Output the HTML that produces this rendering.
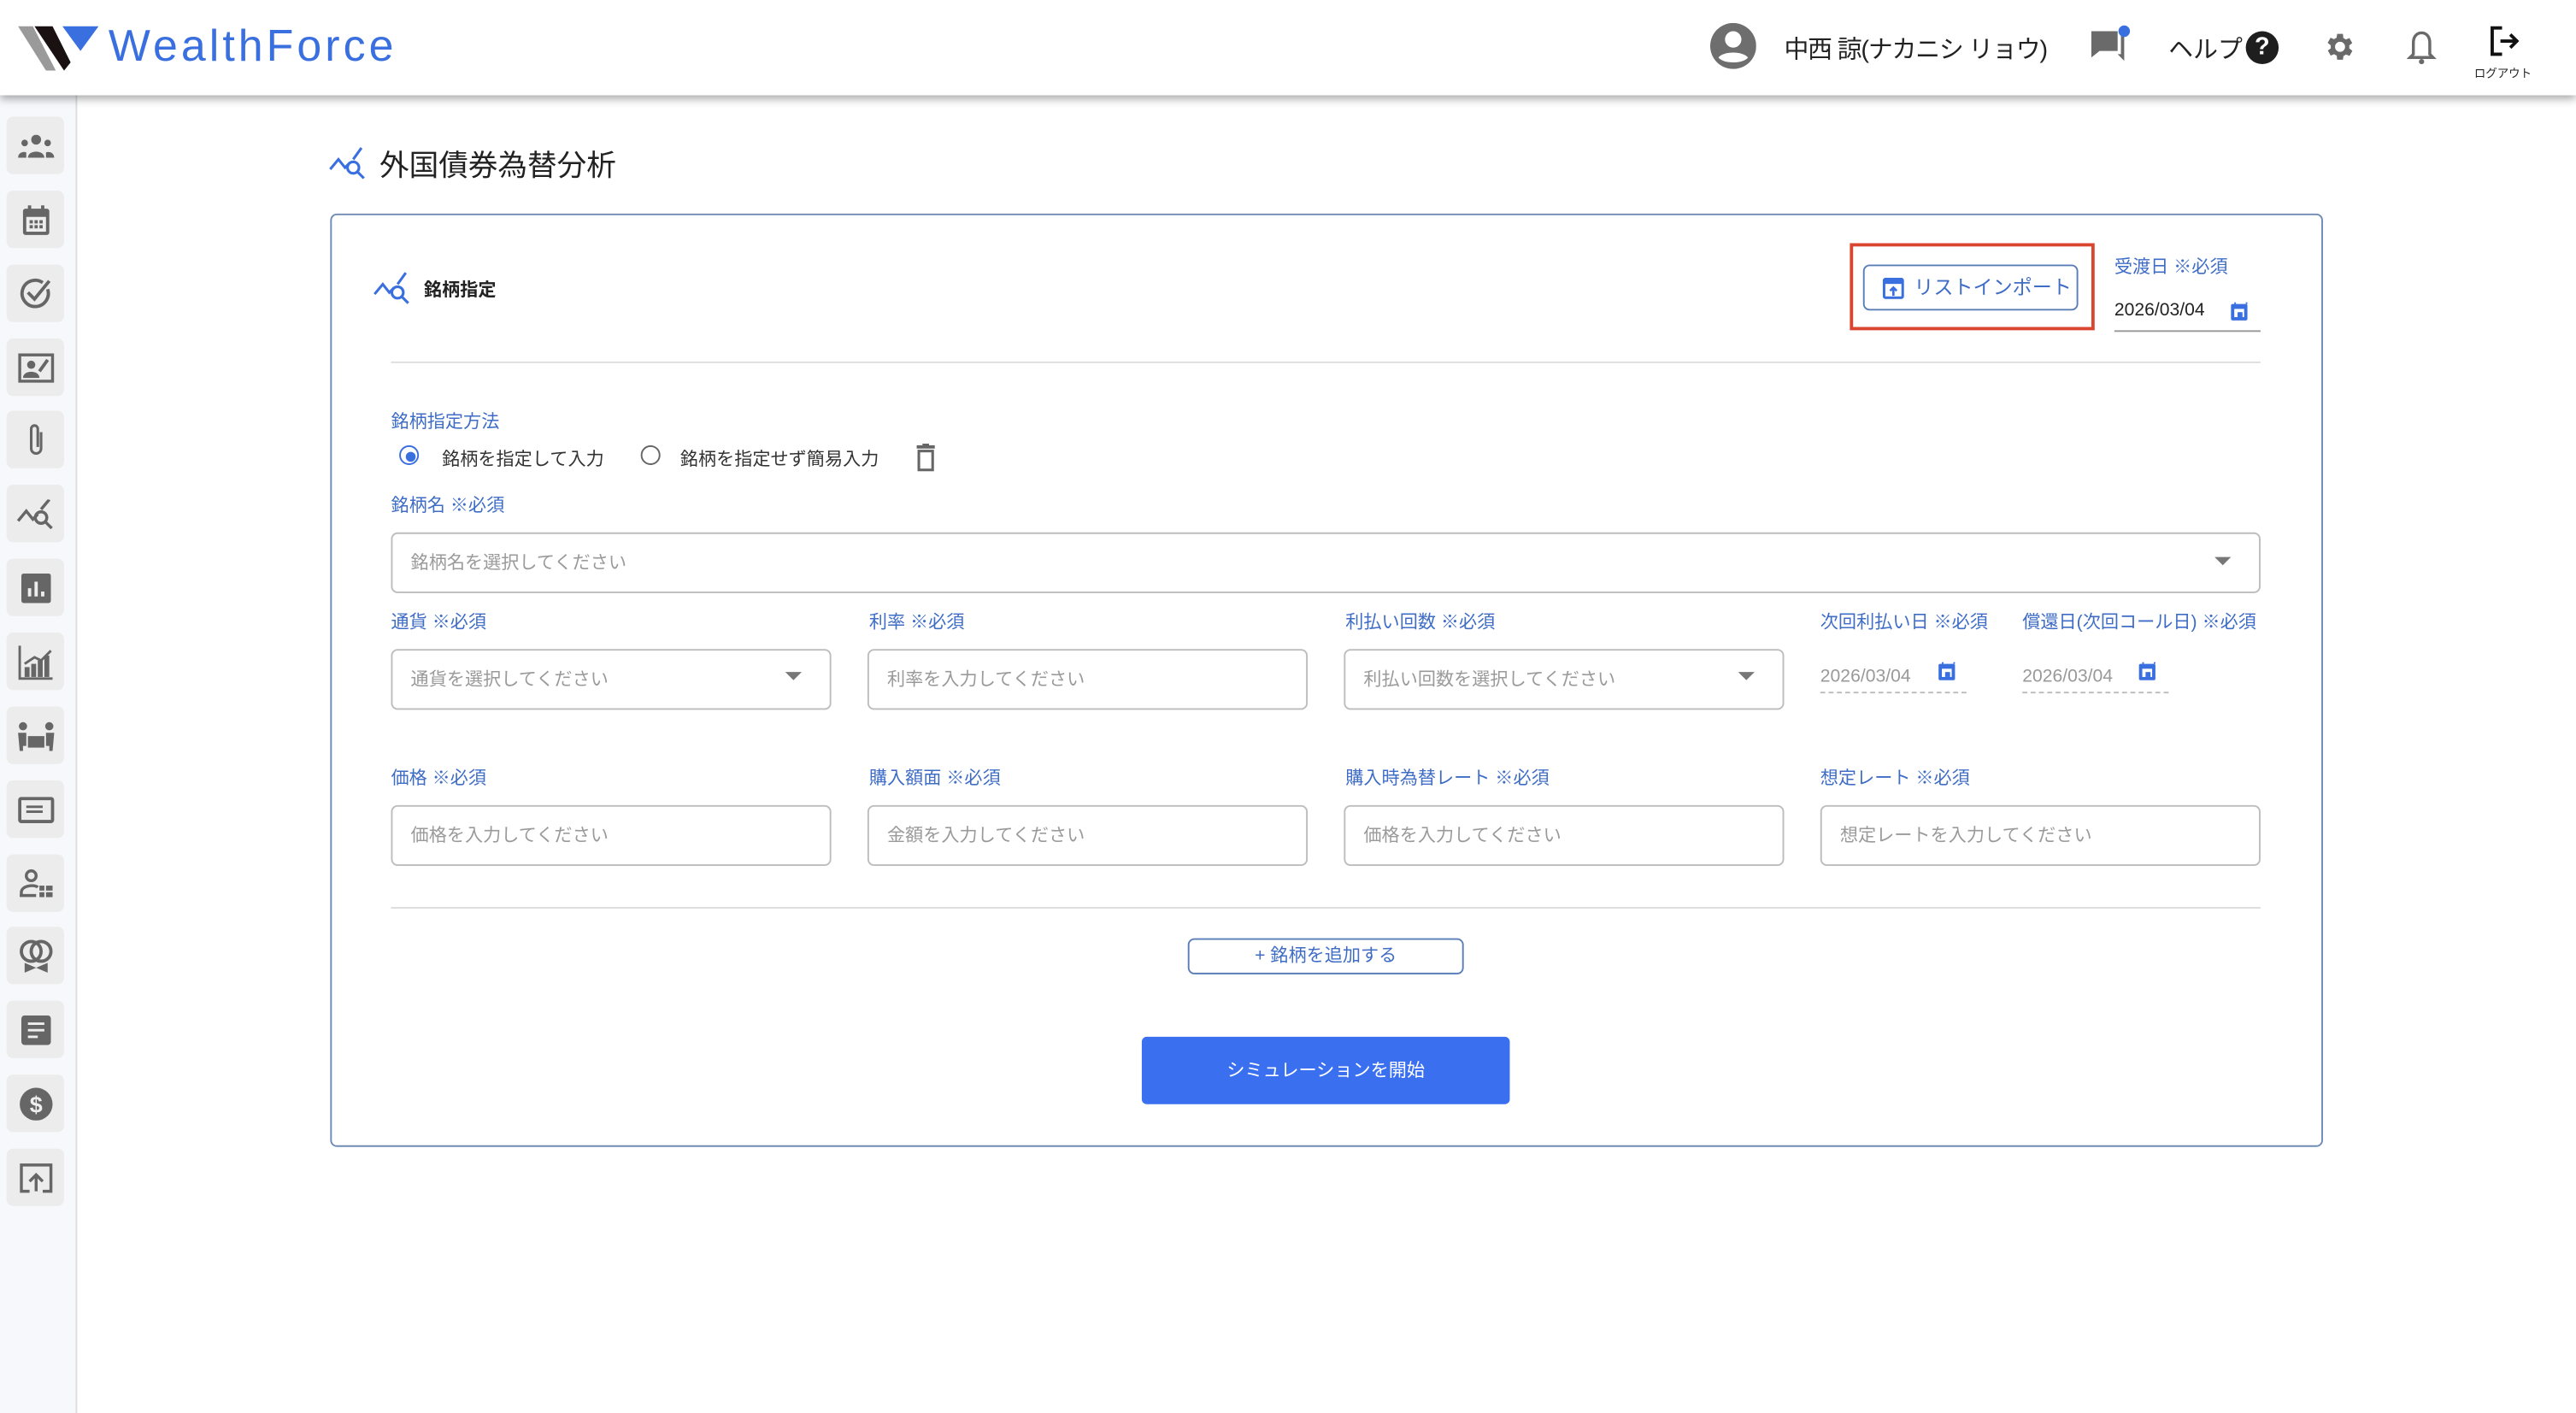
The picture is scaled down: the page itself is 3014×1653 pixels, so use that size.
<!DOCTYPE html>
<html><head><meta charset="utf-8"><style>
html,body{margin:0;padding:0;width:3014px;height:1652px;overflow:hidden;background:#fff}
#s{position:absolute;left:0;top:0;width:1568px;height:860px;transform:scale(1.92219);transform-origin:0 0;font-family:"Liberation Sans","Noto Sans CJK JP",sans-serif;color:#222}
.a{position:absolute}
.hdr{left:0;top:0;width:1568px;height:58px;background:#fff;box-shadow:0 2px 5px rgba(0,0,0,.35);z-index:2}
.side{left:0;top:58px;width:46px;height:802px;background:#f7f8fc;border-right:1px solid #dcdde2}
.sb{left:4px;width:35px;height:35px;background:#ececec;border-radius:4px;display:flex;align-items:center;justify-content:center}
.lbl{font-size:11px;color:#3f6dc6;white-space:nowrap;line-height:14px;margin-top:1px}
.inp{border:1px solid #bdbdbd;border-radius:4px;background:#fff;height:36px;box-sizing:border-box;font-size:11px;color:#9a9a9a;padding-left:11px;line-height:37px;white-space:nowrap}
.arr{position:absolute;right:17px;top:13px;width:0;height:0;border-left:5px solid transparent;border-right:5px solid transparent;border-top:5px solid #777}
.dt{font-size:11px;color:#999;white-space:nowrap;border-bottom:1px dashed #bbb;height:19px;width:89px;line-height:16px}
.cal{position:absolute;width:10px;height:10px;background:#3a6fe0;border-radius:1px}
.cal:after{content:"";position:absolute;left:2px;top:3px;width:6px;height:5px;background:#fff}
.cal:before{content:"";position:absolute;left:4px;top:5px;width:3px;height:3px;background:#3a6fe0;z-index:1;box-shadow:-3px -7px 0 -1px #3a6fe0,4px -7px 0 -1px #3a6fe0}
</style></head><body><div id="s">
<div class="a hdr">
 <svg class="a" style="left:10px;top:13px" width="52" height="30" viewBox="0 0 52 30"><polygon points="1,3 10,3 24,30 18,30" fill="#9a9a9a"/><polygon points="11,3 22,3 33,25 29,30" fill="#1a1212"/><polygon points="28,3 50,3 39,18" fill="#3a6fe0"/></svg>
 <div class="a" style="left:66px;top:12px;font-size:27px;color:#3a6fe0;letter-spacing:2.1px;line-height:32px">WealthForce</div>
 <svg class="a" style="left:1041px;top:14px" width="28" height="28" viewBox="0 0 28 28"><circle cx="14" cy="14" r="14" fill="#6e6e6e"/><circle cx="14" cy="10" r="5" fill="#fff"/><path d="M5 21c3-4 15-4 18 0c-3 4-15 4-18 0z" fill="#fff"/></svg>
 <div class="a" style="left:1086px;top:19px;font-size:15px;color:#222;white-space:nowrap;letter-spacing:-0.6px">中西 諒(ナカニシ リョウ)</div>
 <svg class="a" style="left:1272px;top:15px" width="26" height="24" viewBox="0 0 26 24"><path d="M1 4h16v12H6l-5 4z" fill="#6a6a6a"/><path d="M5 18h14V7h2v15l-4-4z" fill="#6a6a6a"/><circle cx="21" cy="4" r="3.5" fill="#3a6fe0"/></svg>
 <div class="a" style="left:1320px;top:19px;font-size:15px;color:#222">ヘルプ</div>
 <div class="a" style="left:1367px;top:19px;width:20px;height:20px;border-radius:50%;background:#1e1e1e;color:#fff;font-size:15px;font-weight:bold;text-align:center;line-height:20px">?</div>
 <svg class="a" style="left:1413px;top:18px" width="21" height="21" viewBox="0 0 24 24"><path fill="#6a6a6a" d="M19.4 13a7.5 7.5 0 000-2l2.1-1.6-2-3.5-2.5 1a7 7 0 00-1.7-1L15 3h-4l-.4 2.7a7 7 0 00-1.7 1l-2.5-1-2 3.5L6.6 11a7.5 7.5 0 000 2l-2.1 1.6 2 3.5 2.5-1a7 7 0 001.7 1L11 21h4l.4-2.7a7 7 0 001.7-1l2.5 1 2-3.5zM13 15.5a3.5 3.5 0 110-7 3.5 3.5 0 010 7z"/></svg>
 <svg class="a" style="left:1465px;top:18px" width="18" height="22" viewBox="0 0 18 22"><path d="M9 2c3.5 0 5 3 5 6v7l2 2H2l2-2V8c0-3 1.5-6 5-6z" fill="none" stroke="#6a6a6a" stroke-width="1.8"/><circle cx="9" cy="19.5" r="1.6" fill="#6a6a6a"/></svg>
 <svg class="a" style="left:1515px;top:15px" width="20" height="20" viewBox="0 0 20 20"><path d="M8 2H2v16h6" fill="none" stroke="#111" stroke-width="2"/><path d="M7 10h10M13 6l4 4-4 4" fill="none" stroke="#111" stroke-width="2"/></svg>
 <div class="a" style="left:1506px;top:40px;font-size:7px;color:#222">ログアウト</div>
</div>
<div class="a side"></div>
<div class="a sb" style="top:71px"><svg width="22" height="14" viewBox="0 0 22 14"><circle cx="11" cy="3" r="3" fill="#666"/><circle cx="4" cy="5" r="2" fill="#666"/><circle cx="18" cy="5" r="2" fill="#666"/><path d="M6 14c0-5 10-5 10 0zM0 14c0-4 5-4 5-3v3zM22 14c0-4-5-4-5-3v3z" fill="#666"/></svg></div>
<div class="a sb" style="top:116px"><svg width="18" height="20" viewBox="0 0 18 20"><rect x="1" y="3" width="16" height="16" rx="1.5" fill="#666"/><rect x="3" y="8" width="12" height="9" fill="#eee"/><rect x="4" y="1" width="2" height="4" fill="#666"/><rect x="12" y="1" width="2" height="4" fill="#666"/><g fill="#666"><rect x="5" y="10" width="2" height="2"/><rect x="8" y="10" width="2" height="2"/><rect x="11" y="10" width="2" height="2"/><rect x="5" y="13" width="2" height="2"/><rect x="8" y="13" width="2" height="2"/><rect x="11" y="13" width="2" height="2"/></g></svg></div>
<div class="a sb" style="top:161px"><svg width="22" height="22" viewBox="0 0 22 22"><path d="M18 8a8 8 0 11-3-4" fill="none" stroke="#666" stroke-width="2"/><path d="M6 10l4 4 9-11" fill="none" stroke="#666" stroke-width="2"/></svg></div>
<div class="a sb" style="top:206px"><svg width="22" height="18" viewBox="0 0 22 18"><rect x="1" y="1" width="20" height="16" fill="none" stroke="#666" stroke-width="1.8"/><circle cx="8" cy="7" r="2.5" fill="#666"/><path d="M3 15c0-5 10-5 10 0z" fill="#666"/><path d="M13 11l5-7" stroke="#666" stroke-width="2"/></svg></div>
<div class="a sb" style="top:250px"><svg width="12" height="22" viewBox="0 0 12 22"><path d="M9 6v10a3 3 0 01-6 0V4a2 2 0 014 0v11" fill="none" stroke="#666" stroke-width="1.6"/></svg></div>
<div class="a sb" style="top:295px"><svg width="24" height="18" viewBox="0 0 24 18"><path d="M1 13l5-6 4 5 3-3" fill="none" stroke="#666" stroke-width="1.8"/><circle cx="15" cy="11" r="3.5" fill="none" stroke="#666" stroke-width="1.8"/><path d="M17.5 13.5l4 4M15 6l5-6" stroke="#666" stroke-width="1.8"/></svg></div>
<div class="a sb" style="top:340px"><svg width="18" height="18" viewBox="0 0 18 18"><rect width="18" height="18" rx="1.5" fill="#666"/><rect x="4" y="9" width="2" height="5" fill="#eee"/><rect x="8" y="5" width="2" height="9" fill="#eee"/><rect x="12" y="11" width="2" height="3" fill="#eee"/></svg></div>
<div class="a sb" style="top:385px"><svg width="22" height="22" viewBox="0 0 22 22"><path d="M1 1v20h20" fill="none" stroke="#666" stroke-width="1.5"/><g fill="#666"><rect x="4" y="14" width="3" height="6"/><rect x="8" y="12" width="3" height="8"/><rect x="12" y="10" width="3" height="10"/><rect x="16" y="7" width="3" height="13"/></g><path d="M4 12l6-4 4 2 6-6" fill="none" stroke="#666" stroke-width="1.5"/></svg></div>
<div class="a sb" style="top:430px"><svg width="24" height="18" viewBox="0 0 24 18"><circle cx="4" cy="3" r="2.5" fill="#666"/><circle cx="20" cy="3" r="2.5" fill="#666"/><path d="M1 7h5v8H4v3H2zM23 7h-5v8h2v3h2z" fill="#666"/><rect x="7" y="9" width="10" height="7" fill="#666"/></svg></div>
<div class="a sb" style="top:475px"><svg width="22" height="16" viewBox="0 0 22 16"><rect x="1" y="1" width="20" height="14" rx="1" fill="none" stroke="#666" stroke-width="2"/><path d="M5 6h10M5 9h10" stroke="#666" stroke-width="1.5"/></svg></div>
<div class="a sb" style="top:520px"><svg width="22" height="18" viewBox="0 0 22 18"><circle cx="8" cy="4" r="3" fill="none" stroke="#666" stroke-width="1.8"/><path d="M2 16v-2c0-4 8-5 10-3" fill="none" stroke="#666" stroke-width="1.8"/><path d="M1 16h10" stroke="#666" stroke-width="1.8"/><g fill="#666"><rect x="13" y="10" width="3" height="3"/><rect x="17" y="10" width="4" height="3"/><rect x="13" y="14" width="3" height="3"/><rect x="17" y="14" width="4" height="3"/></g></svg></div>
<div class="a sb" style="top:564px"><svg width="22" height="22" viewBox="0 0 22 22"><circle cx="8" cy="8" r="6" fill="none" stroke="#666" stroke-width="2"/><circle cx="14" cy="8" r="6" fill="none" stroke="#666" stroke-width="2"/><path d="M4 15l7 3-7 3zM18 15l-7 3 7 3z" fill="#666"/></svg></div>
<div class="a sb" style="top:609px"><svg width="18" height="18" viewBox="0 0 18 18"><rect width="18" height="18" rx="2" fill="#666"/><path d="M4 5h10M4 9h10M4 13h6" stroke="#eee" stroke-width="1.5"/></svg></div>
<div class="a sb" style="top:654px"><svg width="20" height="20" viewBox="0 0 20 20"><circle cx="10" cy="10" r="10" fill="#666"/><text x="10" y="15" font-size="14" text-anchor="middle" fill="#eee" font-family="Liberation Sans" font-weight="bold">$</text></svg></div>
<div class="a sb" style="top:699px"><svg width="20" height="18" viewBox="0 0 20 18"><path d="M6 17H1V1h18v16h-5" fill="none" stroke="#666" stroke-width="1.8"/><path d="M10 17V7M6 11l4-4 4 4" fill="none" stroke="#666" stroke-width="1.8"/></svg></div>

<svg class="a" style="left:200px;top:89px" width="24" height="22" viewBox="0 0 24 22"><path d="M1 14l5-6 4 5 3-3" fill="none" stroke="#3a6fe0" stroke-width="1.6"/><circle cx="15" cy="13" r="3.5" fill="none" stroke="#3a6fe0" stroke-width="1.6"/><path d="M17.5 15.5l4 4M15 8l5-7" stroke="#3a6fe0" stroke-width="1.6"/></svg>
<div class="a" style="left:231px;top:89px;font-size:18px;color:#222;white-space:nowrap;line-height:24px">外国債券為替分析</div>

<div class="a" style="left:201px;top:130px;width:1213px;height:568px;border:1px solid #6f8bb3;border-radius:4px;box-sizing:border-box"></div>
<svg class="a" style="left:227px;top:165px" width="24" height="22" viewBox="0 0 24 22"><path d="M1 14l5-6 4 5 3-3" fill="none" stroke="#3a6fe0" stroke-width="1.6"/><circle cx="15" cy="13" r="3.5" fill="none" stroke="#3a6fe0" stroke-width="1.6"/><path d="M17.5 15.5l4 4M15 8l5-7" stroke="#3a6fe0" stroke-width="1.6"/></svg>
<div class="a" style="left:258px;top:168px;font-size:11px;font-weight:bold;color:#222">銘柄指定</div>

<div class="a" style="left:1126px;top:148px;width:149px;height:53px;border:2px solid #d9452e;box-sizing:border-box"></div>
<div class="a" style="left:1134px;top:161px;width:131px;height:28px;border:1px solid #5a7fb8;border-radius:4px;box-sizing:border-box;font-size:12px;color:#3f6dc6;line-height:27px;white-space:nowrap">
 <svg style="position:absolute;left:11px;top:7px" width="13" height="13" viewBox="0 0 13 13"><rect x="0.8" y="0.8" width="11.4" height="11.4" rx="1" fill="none" stroke="#3a6fe0" stroke-width="1.6"/><rect x="0.8" y="0.8" width="11.4" height="3" fill="#3a6fe0"/><path d="M6.5 11V6M4.5 8l2-2 2 2" fill="none" stroke="#3a6fe0" stroke-width="1.4"/></svg>
 <span style="position:absolute;left:30px">リストインポート</span></div>
<div class="a lbl" style="left:1287px;top:155px">受渡日 ※必須</div>
<div class="a" style="left:1287px;top:183px;font-size:11px;color:#222">2026/03/04</div>
<div class="cal" style="left:1358px;top:185px"></div>
<div class="a" style="left:1287px;top:201px;width:89px;height:1px;background:#999"></div>

<div class="a" style="left:238px;top:220px;width:1138px;height:1px;background:#ddd"></div>
<div class="a lbl" style="left:238px;top:249px">銘柄指定方法</div>
<div class="a" style="left:243px;top:271px;width:10px;height:10px;border:1.5px solid #3a6fe0;border-radius:50%"></div>
<div class="a" style="left:246.5px;top:274.5px;width:6px;height:6px;background:#3a6fe0;border-radius:50%"></div>
<div class="a" style="left:269px;top:271px;font-size:11px;color:#333;white-space:nowrap">銘柄を指定して入力</div>
<div class="a" style="left:390px;top:271px;width:10px;height:10px;border:1.5px solid #666;border-radius:50%"></div>
<div class="a" style="left:414px;top:271px;font-size:11px;color:#333;white-space:nowrap">銘柄を指定せず簡易入力</div>
<svg class="a" style="left:557px;top:270px" width="13" height="17" viewBox="0 0 13 17"><rect x="1" y="1" width="11" height="2" fill="#666"/><rect x="4.5" y="0" width="4" height="2" fill="#666"/><rect x="2.3" y="4.5" width="8.4" height="11.5" fill="none" stroke="#666" stroke-width="1.6"/></svg>

<div class="a lbl" style="left:238px;top:300px">銘柄名 ※必須</div>
<div class="a inp" style="left:238px;top:324px;width:1138px;height:37px">銘柄名を選択してください<div class="arr" style="top:14px"></div></div>

<div class="a lbl" style="left:238px;top:371px">通貨 ※必須</div>
<div class="a lbl" style="left:529px;top:371px">利率 ※必須</div>
<div class="a lbl" style="left:819px;top:371px">利払い回数 ※必須</div>
<div class="a lbl" style="left:1108px;top:371px">次回利払い日 ※必須</div>
<div class="a lbl" style="left:1231px;top:371px">償還日(次回コール日) ※必須</div>
<div class="a inp" style="left:238px;top:395px;width:268px;height:37px">通貨を選択してください<div class="arr"></div></div>
<div class="a inp" style="left:528px;top:395px;width:268px;height:37px">利率を入力してください</div>
<div class="a inp" style="left:818px;top:395px;width:268px;height:37px">利払い回数を選択してください<div class="arr"></div></div>
<div class="a dt" style="left:1108px;top:402px;padding-top:2px;height:17px">2026/03/04</div><div class="cal" style="left:1180px;top:404px"></div>
<div class="a dt" style="left:1231px;top:402px;padding-top:2px;height:17px">2026/03/04</div><div class="cal" style="left:1302px;top:404px"></div>

<div class="a lbl" style="left:238px;top:466px">価格 ※必須</div>
<div class="a lbl" style="left:529px;top:466px">購入額面 ※必須</div>
<div class="a lbl" style="left:819px;top:466px">購入時為替レート ※必須</div>
<div class="a lbl" style="left:1108px;top:466px">想定レート ※必須</div>
<div class="a inp" style="left:238px;top:490px;width:268px;height:37px">価格を入力してください</div>
<div class="a inp" style="left:528px;top:490px;width:268px;height:37px">金額を入力してください</div>
<div class="a inp" style="left:818px;top:490px;width:268px;height:37px">価格を入力してください</div>
<div class="a inp" style="left:1108px;top:490px;width:268px;height:37px">想定レートを入力してください</div>

<div class="a" style="left:238px;top:552px;width:1138px;height:1px;background:#ddd"></div>
<div class="a" style="left:723px;top:571px;width:168px;height:22px;border:1px solid #5a7fb8;border-radius:4px;box-sizing:border-box;font-size:11px;color:#3f6dc6;text-align:center;line-height:21px">+ 銘柄を追加する</div>
<div class="a" style="left:695px;top:631px;width:224px;height:41px;background:#3a6ff0;border-radius:3px;font-size:11px;color:#fff;text-align:center;line-height:42px">シミュレーションを開始</div>
</div></body></html>
